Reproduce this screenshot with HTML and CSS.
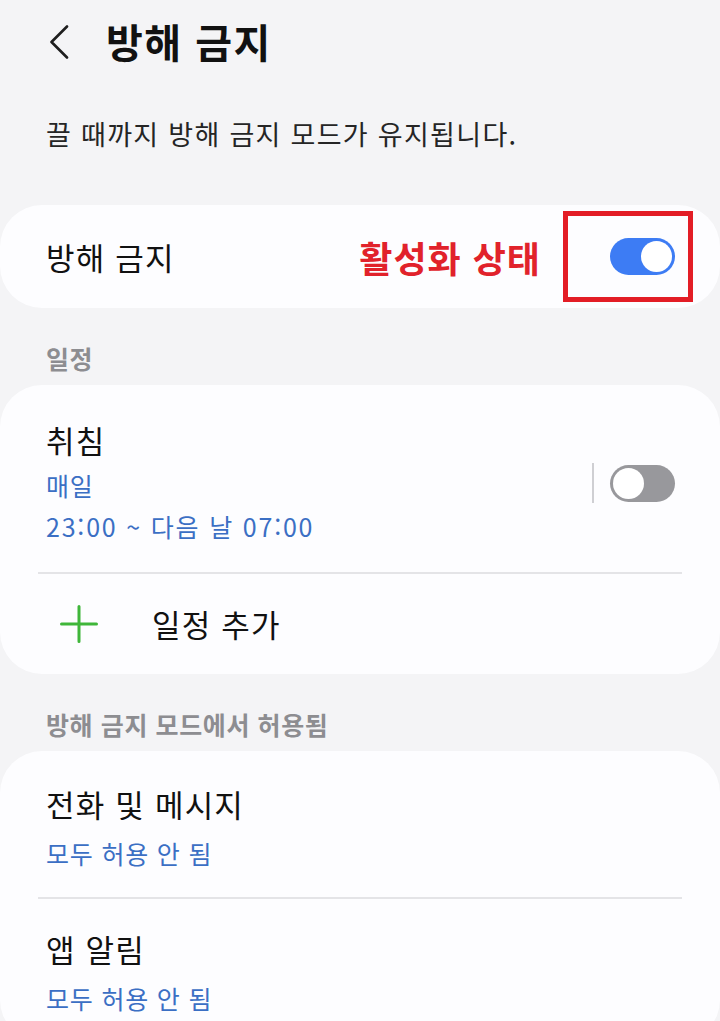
FILE: index.html
```html
<!DOCTYPE html>
<html lang="ko">
<head>
  <meta charset="UTF-8" />
  <meta name="viewport" content="width=device-width, initial-scale=1.0"/>
  <title>방해 금지</title>
  <link rel="stylesheet" href="styles.css">
</head>
<body>

  <!-- top bar -->
  <header class="topbar">
    <svg class="back" width="20" height="34" viewBox="0 0 20 34">
      <polyline points="18,1.5 2.5,17 18,32.5" fill="none" stroke="#1e1e1e" stroke-width="2.6" stroke-linecap="round" stroke-linejoin="round"/>
    </svg>
    <h1 class="title">방해 금지</h1>
  </header>

  <p class="desc">끌 때까지 방해 금지 모드가 유지됩니다.</p>

  <!-- main switch -->
  <div class="card main-switch">
    <span class="item-title">방해 금지</span>
    <span class="note">활성화 상태</span>
    <div class="switch-wrap">
      <div class="toggle on"><span class="knob"></span></div>
      <div class="marker"></div>
    </div>
  </div>

  <div class="section-label">일정</div>

  <div class="card">
    <div class="row schedule">
      <div class="texts">
        <div class="item-title">취침</div>
        <div class="sub first">매일</div>
        <div class="sub time">23:00 ~ 다음 날 07:00</div>
      </div>
      <div class="vline"></div>
      <div class="toggle off"><span class="knob"></span></div>
    </div>
    <div class="sep"></div>
    <div class="row add">
      <svg class="plus" width="38" height="38" viewBox="0 0 38 38">
        <path d="M19 1.5v35M1.5 19h35" stroke="#3fb63a" stroke-width="3" stroke-linecap="round"/>
      </svg>
      <span class="item-title">일정 추가</span>
    </div>
  </div>

  <div class="section-label">방해 금지 모드에서 허용됨</div>

  <div class="card">
    <div class="row allowed">
      <div class="item-title">전화 및 메시지</div>
      <div class="sub first">모두 허용 안 됨</div>
    </div>
    <div class="sep"></div>
    <div class="row allowed last">
      <div class="item-title">앱 알림</div>
      <div class="sub first">모두 허용 안 됨</div>
    </div>
  </div>

</body>
</html>
```

FILE: styles.css
```css
/* page */
body {
  margin: 0;
  background: #f4f4f6;
  color: #111;
  font-family: "Noto Sans CJK KR", "Noto Sans", sans-serif;
  overflow: hidden;
}

/* top bar */
.topbar {
  height: 84px;
  display: flex; align-items: center;
  padding-left: 49px;
}
.back { display: block; }
.title {
  margin: -3px 0 0 37px;
  font-size: 40px; font-weight: 700;
  line-height: 1; letter-spacing: 1.5px;
  color: #111;
}

.desc {
  margin: 24px 0 0;
  padding-left: 46px;
  font-size: 27px; line-height: 52px;
  letter-spacing: 1.3px;
  color: #252525;
}

/* cards */
.card {
  background: #fdfdff;
  border-radius: 42px;
}
.item-title { font-size: 31px; line-height: 34px; letter-spacing: 1.2px; color: #111; }
.sub { font-size: 25px; line-height: 34px; letter-spacing: 0.8px; color: #3b6fc4; margin-top: 7px; }
.sub.first { margin-top: 11px; }
.sub.time { letter-spacing: 1.8px; }

.main-switch {
  margin-top: 45px;
  height: 103px;
  display: flex; align-items: center;
  padding: 0 45px 0 46px;
}
.note {
  margin-left: auto;
  font-size: 36px; font-weight: 700;
  color: #e1222b;
  letter-spacing: 1px;
}
.switch-wrap { position: relative; margin-left: 69px; }
.marker {
  position: absolute;
  left: -47px; top: -27px;
  width: 120px; height: 81px;
  border: 5px solid #e31d26;
}

.section-label {
  padding: 35px 0 12px 46px;
  font-size: 25px; line-height: 30px; font-weight: 700;
  letter-spacing: 0.6px;
  color: #8d8d91;
}

.row { display: flex; }
.schedule {
  align-items: center;
  padding: 38px 45px 29px 46px;
}
.schedule .texts { flex: 1; }
.vline { width: 2px; height: 40px; background: #cfcfd3; margin-right: 16px; }

.sep { height: 2px; background: #e4e4e7; margin: 0 38px; }

.add {
  height: 100px; align-items: center;
  padding-left: 60px; gap: 54px;
}
.plus { display: block; }

.allowed {
  flex-direction: column;
  padding: 36px 46px 27px;
}
.allowed .sub.first { margin-top: 15px; }
.allowed.last { padding-top: 33px; }

/* toggles */
.toggle {
  width: 65px; height: 37px;
  border-radius: 19px;
  position: relative;
  box-sizing: border-box;
}
.toggle .knob {
  position: absolute; top: 3px;
  width: 31px; height: 31px;
  border-radius: 50%;
  background: #fff;
  box-sizing: border-box;
}
.toggle.on { background: #3d7cf4; }
.toggle.on .knob { right: 3px; }
.toggle.off { background: #98989c; }
.toggle.off .knob { left: 3px; }
```
